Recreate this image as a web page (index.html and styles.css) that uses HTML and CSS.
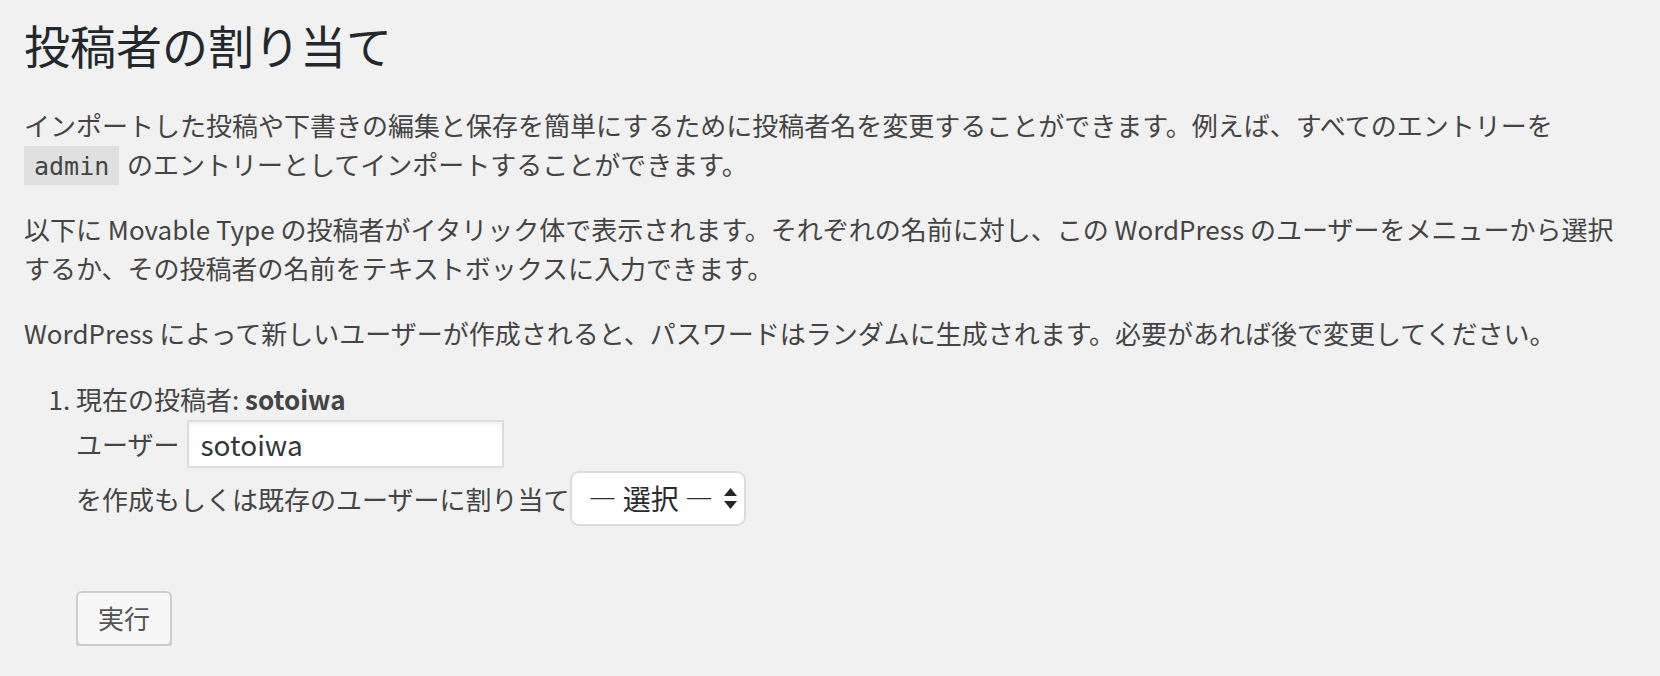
FILE: index.html
```html
<!DOCTYPE html>
<html lang="ja">
<head>
    <meta charset="UTF-8">
    <meta name="viewport" content="width=device-width, initial-scale=1.0">
    <title>投稿者の割り当て</title>
    <link rel="stylesheet" href="styles.css">
</head>
<body>
    <div class="wrap">
        <h1>投稿者の割り当て</h1>

        <p>インポートした投稿や下書きの編集と保存を簡単にするために投稿者名を変更することができます。例えば、すべてのエントリーを <code>admin</code> のエントリーとしてインポートすることができます。</p>
        <p>以下に Movable Type の投稿者が<em>イタリック体</em>で表示されます。それぞれの名前に対し、この WordPress のユーザーをメニューから選択するか、その投稿者の名前をテキストボックスに入力できます。</p>
        <p>WordPress によって新しいユーザーが作成されると、パスワードはランダムに生成されます。必要があれば後で変更してください。</p>

        <!-- Author mapping form -->
        <form class="author-form" action="#" method="post">
            <ol class="authors">
                <li>
                    <div class="author-name">現在の投稿者: <strong>sotoiwa</strong></div>
                    <div class="field-row">
                        <span>ユーザー</span>
                        <input type="text" class="user-input" name="user_0" value="sotoiwa" maxlength="30">
                    </div>
                    <div class="field-row map-row">
                        <span>を作成もしくは既存のユーザーに割り当て</span>
                        <span class="select-wrap">
                            <select name="userselect_0" class="user-select">
                                <option value="#NONE#">— 選択 —</option>
                            </select>
                            <svg class="select-arrows" width="13" height="21" viewBox="0 0 13 21">
                                <path d="M6.5 0 L13 8 L0 8 Z" fill="#262626"/>
                                <path d="M0 13 L13 13 L6.5 21 Z" fill="#262626"/>
                            </svg>
                        </span>
                    </div>
                </li>
            </ol>
            <p class="submit"><input type="submit" class="button" value="実行"></p>
        </form>
    </div>
</body>
</html>
```

FILE: styles.css
```css
/* Page */
body {
    margin: 0;
    padding: 0 25px 0 24px;
    background: #f1f1f1;
    color: #444;
    font-family: "Noto Sans CJK JP", "Noto Sans", sans-serif;
    font-size: 26px;
    line-height: 1.5;
}

.wrap {
    max-width: 1611px;
}

h1 {
    margin: 0;
    padding: 15px 0 4px;
    color: #23282d;
    font-size: 46px;
    font-weight: 400;
    line-height: 1.3;
}

p {
    margin: 26px 0;
}

em {
    font-style: normal;
}

code {
    padding: 6px 10px 4px;
    margin: 0 2px 0 0;
    background: rgba(0,0,0,0.07);
    font-family: "DejaVu Sans Mono", "Liberation Mono", monospace;
    font-size: 25px;
    line-height: 1;
}

/* Author list */
.authors {
    margin: 27px 0 0 52px;
    padding: 0;
    list-style-type: decimal;
}

.authors li {
    margin: 0;
}

.author-name strong {
    color: #444;
    font-weight: 700;
}

.field-row {
    display: flex;
    align-items: center;
    padding: 2px 0;
}

.map-row {
    padding: 1px 0 0;
}

.user-input {
    width: 317px;
    height: 48px;
    margin-left: 8px;
    padding: 0 11px;
    box-sizing: border-box;
    border: 2px solid #ddd;
    background: #fff;
    box-shadow: inset 0 2px 4px rgba(0,0,0,0.05);
    color: #32373c;
    font-family: "Noto Sans CJK JP", "Noto Sans", sans-serif;
    font-size: 28px;
    outline: none;
}

/* Select with native-looking arrows */
.select-wrap {
    position: relative;
    display: inline-block;
    margin-left: 1px;
}

.user-select {
    appearance: none;
    -webkit-appearance: none;
    width: 176px;
    height: 55px;
    padding: 0 0 0 16px;
    box-sizing: border-box;
    border: 2px solid #dcdcdc;
    border-radius: 9px;
    background: #fff;
    color: #2b2b2b;
    font-family: "Noto Sans CJK JP", "Noto Sans", sans-serif;
    font-size: 28px;
    outline: none;
}

.select-arrows {
    position: absolute;
    top: 17px;
    right: 9px;
    pointer-events: none;
}

/* Submit */
.submit {
    margin: 65px 0 0 52px;
}

.button {
    height: 55px;
    padding: 0 20px 2px;
    box-sizing: border-box;
    border: 2px solid #ccc;
    border-radius: 6px;
    background: #f7f7f7;
    box-shadow: 0 3px 0 #ccc;
    color: #555;
    font-family: "Noto Sans CJK JP", "Noto Sans", sans-serif;
    font-size: 26px;
    cursor: pointer;
}
```
